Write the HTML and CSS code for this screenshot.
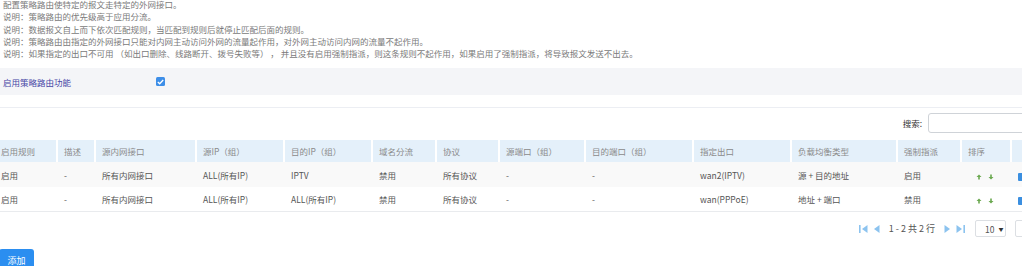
FILE: index.html
```html
<!DOCTYPE html>
<html lang="zh-CN">
<head>
    <meta charset="UTF-8">
    <title>策略路由</title>
    <link rel="stylesheet" href="styles.css">
</head>
<body>
    <div class="notes">
        <p>配置策略路由使特定的报文走特定的外网接口。</p>
        <p>说明：策略路由的优先级高于应用分流。</p>
        <p>说明：数据报文自上而下依次匹配规则，当匹配到规则后就停止匹配后面的规则。</p>
        <p>说明：策略路由由指定的外网接口只能对内网主动访问外网的流量起作用，对外网主动访问内网的流量不起作用。</p>
        <p>说明：如果指定的出口不可用 （如出口删除、线路断开、拨号失败等） ， 并且没有启用强制指派，则这条规则不起作用，如果启用了强制指派，将导致报文发送不出去。</p>
    </div>

    <div class="switch-bar">
        <label class="switch-label">启用策略路由功能</label>
        <span class="checkbox">
            <svg width="7" height="6" viewBox="0 0 7 6"><path d="M0.8 3.1 L2.7 4.8 L6.2 1" fill="none" stroke="#fff" stroke-width="1.3"/></svg>
        </span>
    </div>

    <div class="panel">
        <div class="search-row">
            <span class="search-label">搜索:</span>
            <input type="text" class="search-input">
        </div>

        <table class="rule-table">
            <colgroup>
                <col style="width:63px"><col style="width:38px"><col style="width:101px"><col style="width:88px">
                <col style="width:88px"><col style="width:64px"><col style="width:63px"><col style="width:86px">
                <col style="width:108px"><col style="width:98px"><col style="width:106px"><col style="width:64px">
                <col style="width:50px"><col style="width:70px">
            </colgroup>
            <thead>
                <tr>
                    <th>启用规则</th><th>描述</th><th>源内网接口</th><th>源IP（组）</th><th>目的IP（组）</th>
                    <th>域名分流</th><th>协议</th><th>源端口（组）</th><th>目的端口（组）</th><th>指定出口</th>
                    <th>负载均衡类型</th><th>强制指派</th><th>排序</th><th></th>
                </tr>
            </thead>
            <tbody>
                <tr>
                    <td>启用</td><td>-</td><td>所有内网接口</td><td>ALL(所有IP)</td><td>IPTV</td>
                    <td>禁用</td><td>所有协议</td><td>-</td><td>-</td><td>wan2(IPTV)</td>
                    <td>源 + 目的地址</td><td>启用</td>
                    <td class="sort">
                        <svg width="6" height="6" viewBox="0 0 6 6"><path d="M3 0.5 L5.5 3 L3.8 3 L3.8 5.5 L2.2 5.5 L2.2 3 L0.5 3 Z" fill="#6aa84f"/></svg>
                        <svg width="6" height="6" viewBox="0 0 6 6"><path d="M3 5.5 L5.5 3 L3.8 3 L3.8 0.5 L2.2 0.5 L2.2 3 L0.5 3 Z" fill="#6aa84f"/></svg>
                    </td>
                    <td><span class="op-btn"></span></td>
                </tr>
                <tr>
                    <td>启用</td><td>-</td><td>所有内网接口</td><td>ALL(所有IP)</td><td>ALL(所有IP)</td>
                    <td>禁用</td><td>所有协议</td><td>-</td><td>-</td><td>wan(PPPoE)</td>
                    <td>地址 + 端口</td><td>禁用</td>
                    <td class="sort">
                        <svg width="6" height="6" viewBox="0 0 6 6"><path d="M3 0.5 L5.5 3 L3.8 3 L3.8 5.5 L2.2 5.5 L2.2 3 L0.5 3 Z" fill="#6aa84f"/></svg>
                        <svg width="6" height="6" viewBox="0 0 6 6"><path d="M3 5.5 L5.5 3 L3.8 3 L3.8 0.5 L2.2 0.5 L2.2 3 L0.5 3 Z" fill="#6aa84f"/></svg>
                    </td>
                    <td><span class="op-btn"></span></td>
                </tr>
            </tbody>
        </table>

        <div class="pager">
            <svg class="pg-icon" width="9" height="10" viewBox="0 0 9 10"><rect x="0" y="1" width="1.6" height="8" fill="#8cc3ef"/><path d="M8.5 1 L8.5 9 L3 5 Z" fill="#8cc3ef"/></svg>
            <svg class="pg-icon" width="7" height="10" viewBox="0 0 7 10"><path d="M6.5 1 L6.5 9 L1 5 Z" fill="#8cc3ef"/></svg>
            <span class="pg-info">1 - 2 共 2 行</span>
            <svg class="pg-icon" width="7" height="10" viewBox="0 0 7 10"><path d="M0.5 1 L0.5 9 L6 5 Z" fill="#8cc3ef"/></svg>
            <svg class="pg-icon" width="9" height="10" viewBox="0 0 9 10"><path d="M0.5 1 L0.5 9 L6 5 Z" fill="#8cc3ef"/><rect x="7.4" y="1" width="1.6" height="8" fill="#8cc3ef"/></svg>
            <span class="pg-size">10 <span class="caret">▼</span></span>
            <span class="pg-jump"></span>
        </div>

        <button type="button" class="add-button">添加</button>
    </div>
</body>
</html>
```

FILE: styles.css
```css
* {
    margin: 0;
    padding: 0;
    box-sizing: border-box;
}

body {
    background: #fff;
    font-family: "Noto Sans CJK SC", "Noto Sans", sans-serif;
    font-size: 8.5px;
    color: #555;
    overflow: hidden;
}

.notes {
    margin-top: -2px;
    padding-left: 3px;
    line-height: 12.3px;
    color: #7a7a7a;
    white-space: nowrap;
}

.switch-bar {
    margin-top: 9px;
    height: 27px;
    background: #f4f5f8;
    display: flex;
    align-items: center;
    padding-left: 3px;
}

.switch-label {
    width: 153px;
    color: #4646a6;
}

.checkbox {
    width: 9px;
    height: 9px;
    border-radius: 1.5px;
    background: #3d8ee8;
    display: flex;
    align-items: center;
    justify-content: center;
}

.panel {
    margin-top: 12px;
    margin-left: -5px;
    width: 1087px;
    border-top: 1px solid #eceef3;
}

.search-row {
    display: flex;
    justify-content: flex-end;
    align-items: center;
    padding-top: 5px;
    padding-right: 2px;
}

.search-label {
    color: #333;
    margin-right: 6px;
}

.search-input {
    width: 152px;
    height: 20px;
    border: 1px solid #cfd3d8;
    border-radius: 3px;
    outline: none;
}

.rule-table {
    margin-top: 7px;
    width: 1087px;
    table-layout: fixed;
    border-collapse: separate;
    border-spacing: 0;
}

.rule-table th {
    height: 22px;
    background: #e4f0fa;
    color: #8a8a8a;
    font-weight: normal;
    text-align: left;
    padding-left: 6px;
    border-right: 2px solid #fff;
    white-space: nowrap;
    overflow: hidden;
}

.rule-table td {
    height: 25px;
    padding-left: 6px;
    color: #555;
    white-space: nowrap;
    overflow: hidden;
}

.rule-table tbody tr:nth-child(odd) td {
    background: #f9f9f9;
}

.rule-table tbody tr:last-child td {
    border-bottom: 1px solid #e9ebee;
}

.rule-table td.sort {
    padding-left: 14px;
}

.sort svg {
    margin-right: 4px;
    vertical-align: middle;
}

.op-btn {
    display: inline-block;
    width: 8px;
    height: 8px;
    background: #3b8fe0;
    border-radius: 1px;
    vertical-align: middle;
}

.pager {
    display: flex;
    justify-content: flex-end;
    align-items: center;
    margin-top: 8px;
    padding-right: 17px;
    height: 17px;
    color: #555;
}

.pg-icon {
    margin-right: 5px;
}

.pg-info {
    margin: 0 9px 0 4px;
    font-size: 9px;
}

.pg-size {
    width: 31px;
    height: 17px;
    border: 1px solid #dcdfe3;
    border-radius: 2px;
    margin-left: 5px;
    padding-left: 9px;
    display: flex;
    align-items: center;
}

.caret {
    font-size: 5px;
    margin-left: 4px;
    color: #333;
}

.pg-jump {
    width: 50px;
    height: 17px;
    border: 1px solid #dcdfe3;
    border-radius: 2px;
    margin-left: 9px;
}

.add-button {
    margin-top: 12px;
    margin-left: 4px;
    width: 35px;
    height: 22px;
    border: none;
    border-radius: 3px;
    background: #2b8ef0;
    color: #fff;
    font-family: "Noto Sans CJK SC", sans-serif;
    font-size: 9px;
}
```
